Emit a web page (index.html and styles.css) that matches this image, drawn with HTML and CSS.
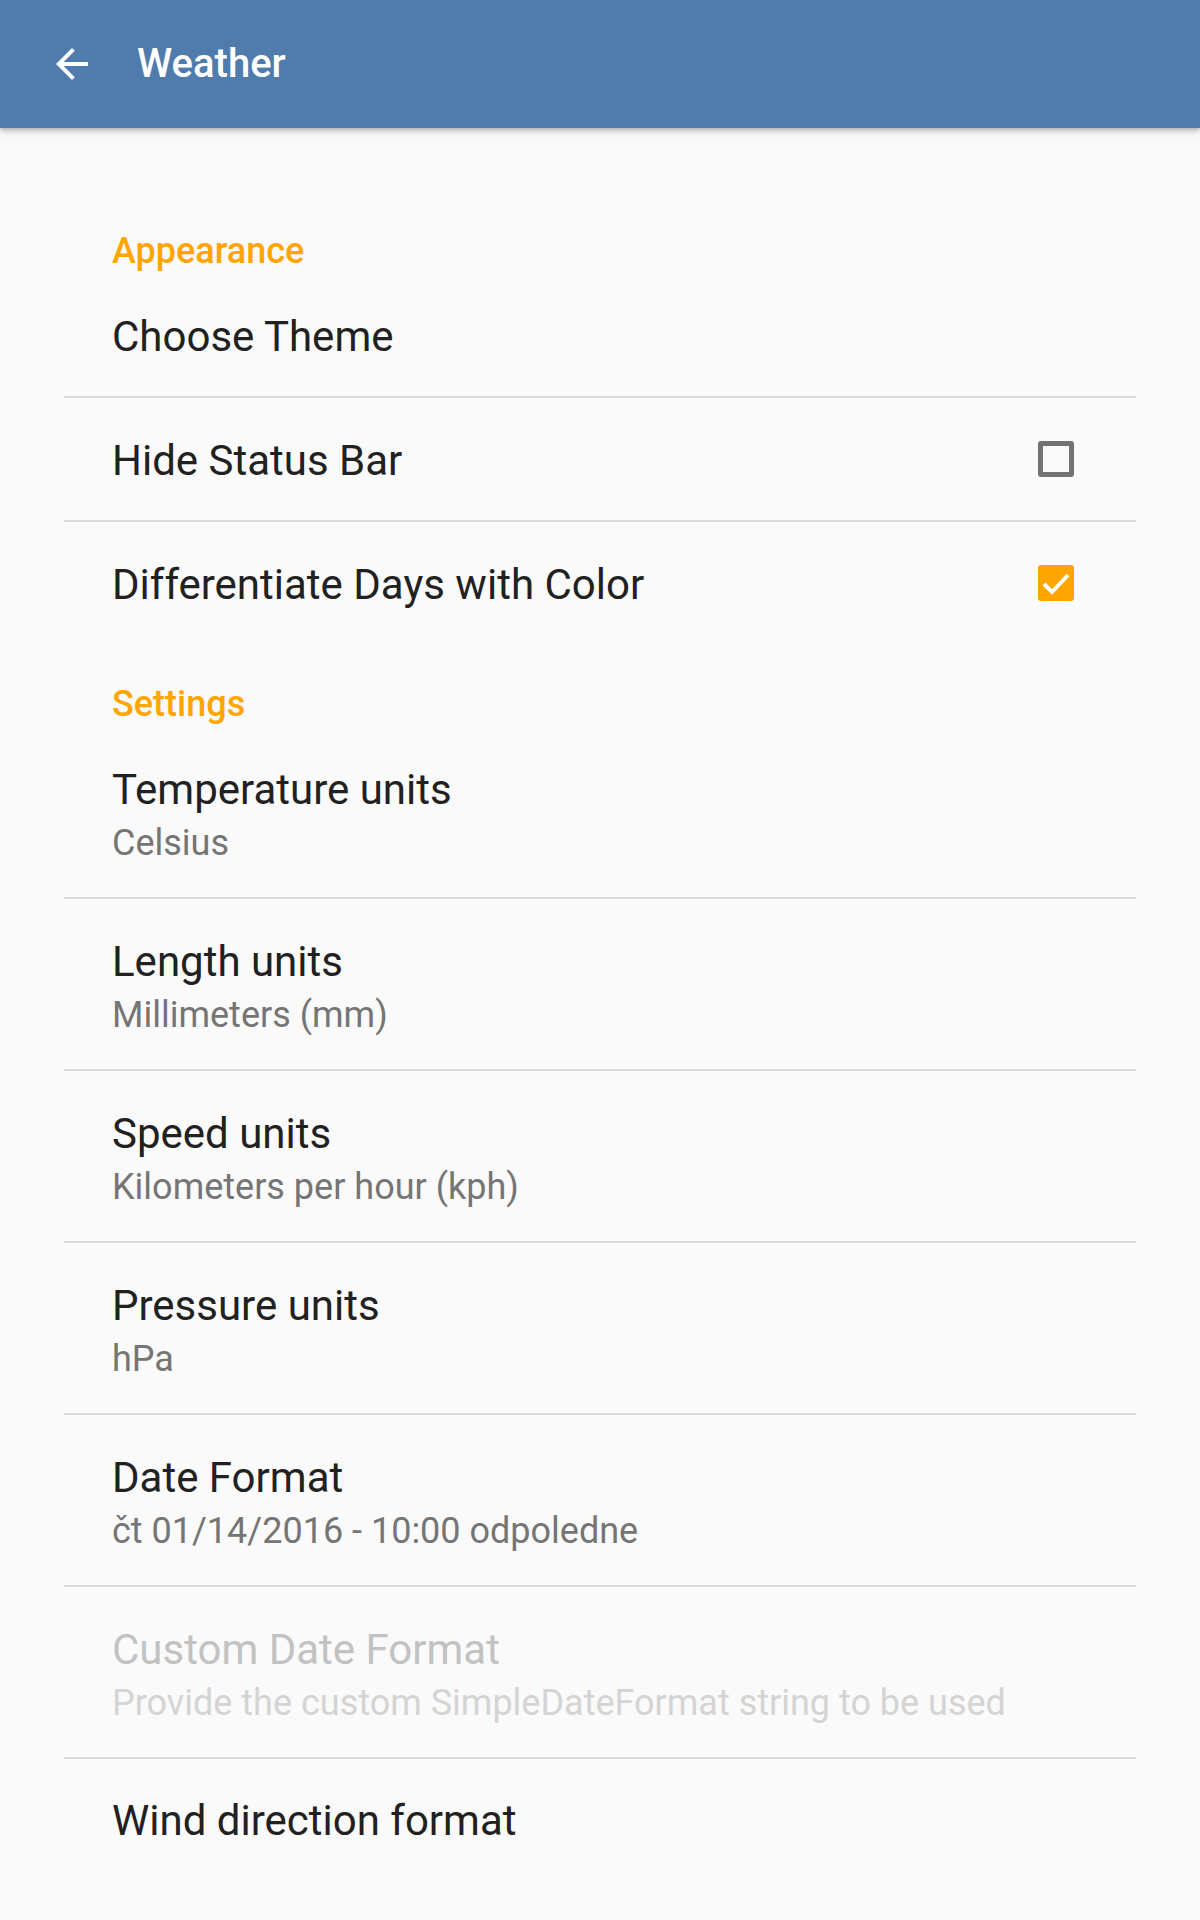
FILE: index.html
```html
<!DOCTYPE html>
<html>

<head>
    <meta charset="utf-8">
    <title>Weather settings</title>
    <link rel="stylesheet" href="styles.css">
</head>

<body>
    <header class="toolbar">
        <svg class="back" viewBox="0 0 24 24" width="48" height="48">
            <path d="M20 11H7.83l5.59-5.59L12 4l-8 8 8 8 1.41-1.41L7.83 13H20v-2z" fill="#fff" />
        </svg>
        <h1 class="toolbar-title">Weather</h1>
    </header>

    <main class="prefs">
        <section class="group">
            <h2 class="category">Appearance</h2>
            <div class="pref single">
                <div class="pref-text">
                    <div class="pref-title">Choose Theme</div>
                </div>
            </div>
            <div class="pref single">
                <div class="pref-text">
                    <div class="pref-title">Hide Status Bar</div>
                </div>
                <span class="check"></span>
            </div>
            <div class="pref single">
                <div class="pref-text">
                    <div class="pref-title">Differentiate Days with Color</div>
                </div>
                <span class="check checked">
                    <svg viewBox="0 0 36 36" width="36" height="36">
                        <polyline points="6,19 14,27 30,10" fill="none" stroke="#fff" stroke-width="4" />
                    </svg>
                </span>
            </div>
        </section>

        <section class="group">
            <h2 class="category">Settings</h2>
            <div class="pref">
                <div class="pref-text">
                    <div class="pref-title">Temperature units</div>
                    <div class="pref-summary">Celsius</div>
                </div>
            </div>
            <div class="pref">
                <div class="pref-text">
                    <div class="pref-title">Length units</div>
                    <div class="pref-summary">Millimeters (mm)</div>
                </div>
            </div>
            <div class="pref">
                <div class="pref-text">
                    <div class="pref-title">Speed units</div>
                    <div class="pref-summary">Kilometers per hour (kph)</div>
                </div>
            </div>
            <div class="pref">
                <div class="pref-text">
                    <div class="pref-title">Pressure units</div>
                    <div class="pref-summary">hPa</div>
                </div>
            </div>
            <div class="pref">
                <div class="pref-text">
                    <div class="pref-title">Date Format</div>
                    <div class="pref-summary">čt 01/14/2016 - 10:00 odpoledne</div>
                </div>
            </div>
            <div class="pref disabled">
                <div class="pref-text">
                    <div class="pref-title">Custom Date Format</div>
                    <div class="pref-summary">Provide the custom SimpleDateFormat string to be used</div>
                </div>
            </div>
            <div class="pref single">
                <div class="pref-text">
                    <div class="pref-title">Wind direction format</div>
                </div>
            </div>
        </section>
    </main>
</body>

</html>
```

FILE: styles.css
```css
html {
    font-family: Roboto, 'Noto Sans', sans-serif;
}

body {
    margin: 0;
    background-color: #fafafa;
    min-height: 1920px;
}

.toolbar {
    height: 128px;
    background-color: #507bad;
    display: flex;
    align-items: center;
    padding-left: 48px;
    box-shadow: 0 2px 4px rgba(0, 0, 0, 0.22), 0 4px 10px rgba(0, 0, 0, 0.12);
    position: relative;
}

.back {
    display: block;
}

.toolbar-title {
    margin: 0 0 0 41px;
    color: #fff;
    font-size: 40px;
    font-weight: 500;
    line-height: 48px;
}

.prefs {
    padding: 63px 64px 0 64px;
}

.category {
    margin: 0;
    padding: 40px 0 3px 48px;
    color: #ffa500;
    font-size: 36px;
    font-weight: 500;
    line-height: 40px;
}

.pref {
    display: flex;
    align-items: center;
    padding: 39px 62px 25px 48px;
}

.pref + .pref {
    border-top: 2px solid #dadada;
}

.pref.single {
    box-sizing: border-box;
    padding-top: 3px;
    padding-bottom: 0;
    height: 122px;
}

.pref.single + .pref.single {
    height: 124px;
}

.pref-text {
    flex: 1;
}

.pref-title {
    font-size: 42px;
    line-height: 48px;
    color: #212121;
}

.pref-summary {
    font-size: 36px;
    line-height: 58px;
    color: #757575;
}

.disabled .pref-title {
    color: #c2c2c2;
}

.disabled .pref-summary {
    color: #d4d4d4;
}

.check {
    width: 36px;
    height: 36px;
    margin-top: -3px;
    box-sizing: border-box;
    border: 5px solid #737373;
    border-radius: 3px;
}

.check.checked {
    border: none;
    background-color: #ffa500;
}

.check svg {
    display: block;
}
```
